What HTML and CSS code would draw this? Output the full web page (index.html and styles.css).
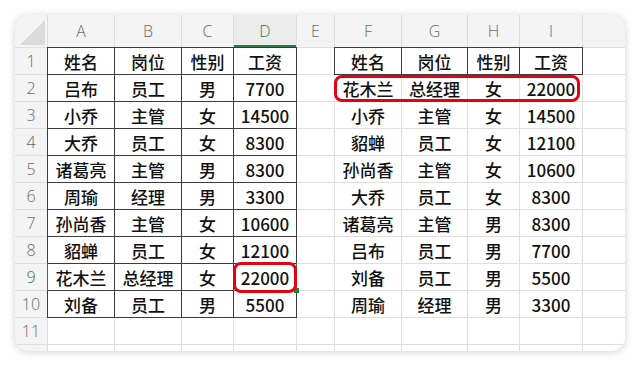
FILE: index.html
```html
<!DOCTYPE html>
<html lang="zh">
<head>
<meta charset="utf-8">
<link rel="stylesheet" href="styles.css">
</head>
<body>
<div class="card">
  <div class="sheet">
    <div class="corner"><svg width="32" height="32" viewBox="0 0 32 32"><polygon points="30,5 30,30 5,30" fill="#dadada"/></svg></div>
    <div class="ch">A</div><div class="ch">B</div><div class="ch">C</div><div class="ch act">D</div><div class="ch">E</div><div class="ch">F</div><div class="ch">G</div><div class="ch">H</div><div class="ch">I</div><div class="ch"></div>

    <div class="rh">1</div><div class="c b">姓名</div><div class="c b">岗位</div><div class="c b">性别</div><div class="c b">工资</div><div class="c"></div><div class="c b">姓名</div><div class="c b">岗位</div><div class="c b">性别</div><div class="c b">工资</div><div class="c"></div>
    <div class="rh">2</div><div class="c b">吕布</div><div class="c b">员工</div><div class="c b">男</div><div class="c b">7700</div><div class="c"></div><div class="c">花木兰<span class="mark mark-row"></span></div><div class="c">总经理</div><div class="c">女</div><div class="c">22000</div><div class="c"></div>
    <div class="rh">3</div><div class="c b">小乔</div><div class="c b">主管</div><div class="c b">女</div><div class="c b">14500</div><div class="c"></div><div class="c">小乔</div><div class="c">主管</div><div class="c">女</div><div class="c">14500</div><div class="c"></div>
    <div class="rh">4</div><div class="c b">大乔</div><div class="c b">员工</div><div class="c b">女</div><div class="c b">8300</div><div class="c"></div><div class="c">貂蝉</div><div class="c">员工</div><div class="c">女</div><div class="c">12100</div><div class="c"></div>
    <div class="rh">5</div><div class="c b">诸葛亮</div><div class="c b">主管</div><div class="c b">男</div><div class="c b">8300</div><div class="c"></div><div class="c">孙尚香</div><div class="c">主管</div><div class="c">女</div><div class="c">10600</div><div class="c"></div>
    <div class="rh">6</div><div class="c b">周瑜</div><div class="c b">经理</div><div class="c b">男</div><div class="c b">3300</div><div class="c"></div><div class="c">大乔</div><div class="c">员工</div><div class="c">女</div><div class="c">8300</div><div class="c"></div>
    <div class="rh">7</div><div class="c b">孙尚香</div><div class="c b">主管</div><div class="c b">女</div><div class="c b">10600</div><div class="c"></div><div class="c">诸葛亮</div><div class="c">主管</div><div class="c">男</div><div class="c">8300</div><div class="c"></div>
    <div class="rh">8</div><div class="c b">貂蝉</div><div class="c b">员工</div><div class="c b">女</div><div class="c b">12100</div><div class="c"></div><div class="c">吕布</div><div class="c">员工</div><div class="c">男</div><div class="c">7700</div><div class="c"></div>
    <div class="rh act">9</div><div class="c b sel-left">花木兰</div><div class="c b">总经理</div><div class="c b">女</div><div class="c b sel-cell">22000<span class="mark mark-cell"></span></div><div class="c"></div><div class="c">刘备</div><div class="c">员工</div><div class="c">男</div><div class="c">5500</div><div class="c"></div>
    <div class="rh">10</div><div class="c b">刘备</div><div class="c b">员工</div><div class="c b">男</div><div class="c b">5500</div><div class="c"></div><div class="c">周瑜</div><div class="c">经理</div><div class="c">男</div><div class="c">3300</div><div class="c"></div>
    <div class="rh">11</div><div class="c"></div><div class="c"></div><div class="c"></div><div class="c"></div><div class="c"></div><div class="c"></div><div class="c"></div><div class="c"></div><div class="c"></div><div class="c"></div>
    <div class="rh"></div><div class="c"></div><div class="c"></div><div class="c"></div><div class="c"></div><div class="c"></div><div class="c"></div><div class="c"></div><div class="c"></div><div class="c"></div><div class="c"></div>
  </div>
</div>
</body>
</html>
```

FILE: styles.css
```css
html, body {
  margin: 0;
  padding: 0;
  background: #ffffff;
}

.card {
  margin: 15px;
  width: 610px;
  height: 336px;
  border-radius: 14px;
  overflow: hidden;
  background: #ffffff;
  box-shadow: 0 1px 9px rgba(0, 0, 0, 0.18);
}

.sheet {
  display: grid;
  grid-template-columns: 32px 66px 66px 51px 62px 37px 66px 65px 51px 62px 1fr;
  grid-template-rows: 32px repeat(12, 26px);
  gap: 1px;
  background: #dedede;
  font-family: "Noto Sans CJK SC", "Noto Sans", sans-serif;
}

.corner {
  background: #f4f4f4;
  display: flex;
}

.ch, .rh {
  background: #f4f4f4;
  color: #6a6a6a;
  display: flex;
  align-items: center;
  justify-content: center;
  font-family: "Open Sans", "Noto Sans", sans-serif;
  font-weight: 300;
  font-size: 16px;
}

.ch.act {
  color: #2c7a46;
  background: #ececec;
  box-shadow: inset 0 -2px 0 #2c7a46;
}

.rh.act {
  color: #2c7a46;
}

.c {
  background: #ffffff;
  display: flex;
  align-items: center;
  justify-content: center;
  font-size: 17px;
  font-weight: 500;
  color: #111111;
  position: relative;
}

.c.b {
  outline: 1px solid #3c3c3c;
}

.sel-left::before {
  content: "";
  position: absolute;
  left: -1px;
  top: -1px;
  bottom: -1px;
  width: 1px;
  background: #2c7a46;
  z-index: 2;
}

.sel-cell::after {
  content: "";
  position: absolute;
  right: -3px;
  bottom: -3px;
  width: 5px;
  height: 5px;
  background: #2c7a46;
  z-index: 2;
}

.sel-cell::before {
  content: "";
  position: absolute;
  inset: -1px;
  border-right: 1px solid #2c7a46;
  border-bottom: 1px solid #2c7a46;
  z-index: 2;
}

.mark {
  position: absolute;
  border: 3px solid #e60012;
  border-radius: 8px;
  z-index: 3;
  box-sizing: border-box;
}

.mark-row {
  left: -1px;
  top: 0;
  width: 246px;
  height: 27px;
}

.mark-cell {
  left: -1px;
  right: -1px;
  top: -2px;
  bottom: -3px;
}
```
